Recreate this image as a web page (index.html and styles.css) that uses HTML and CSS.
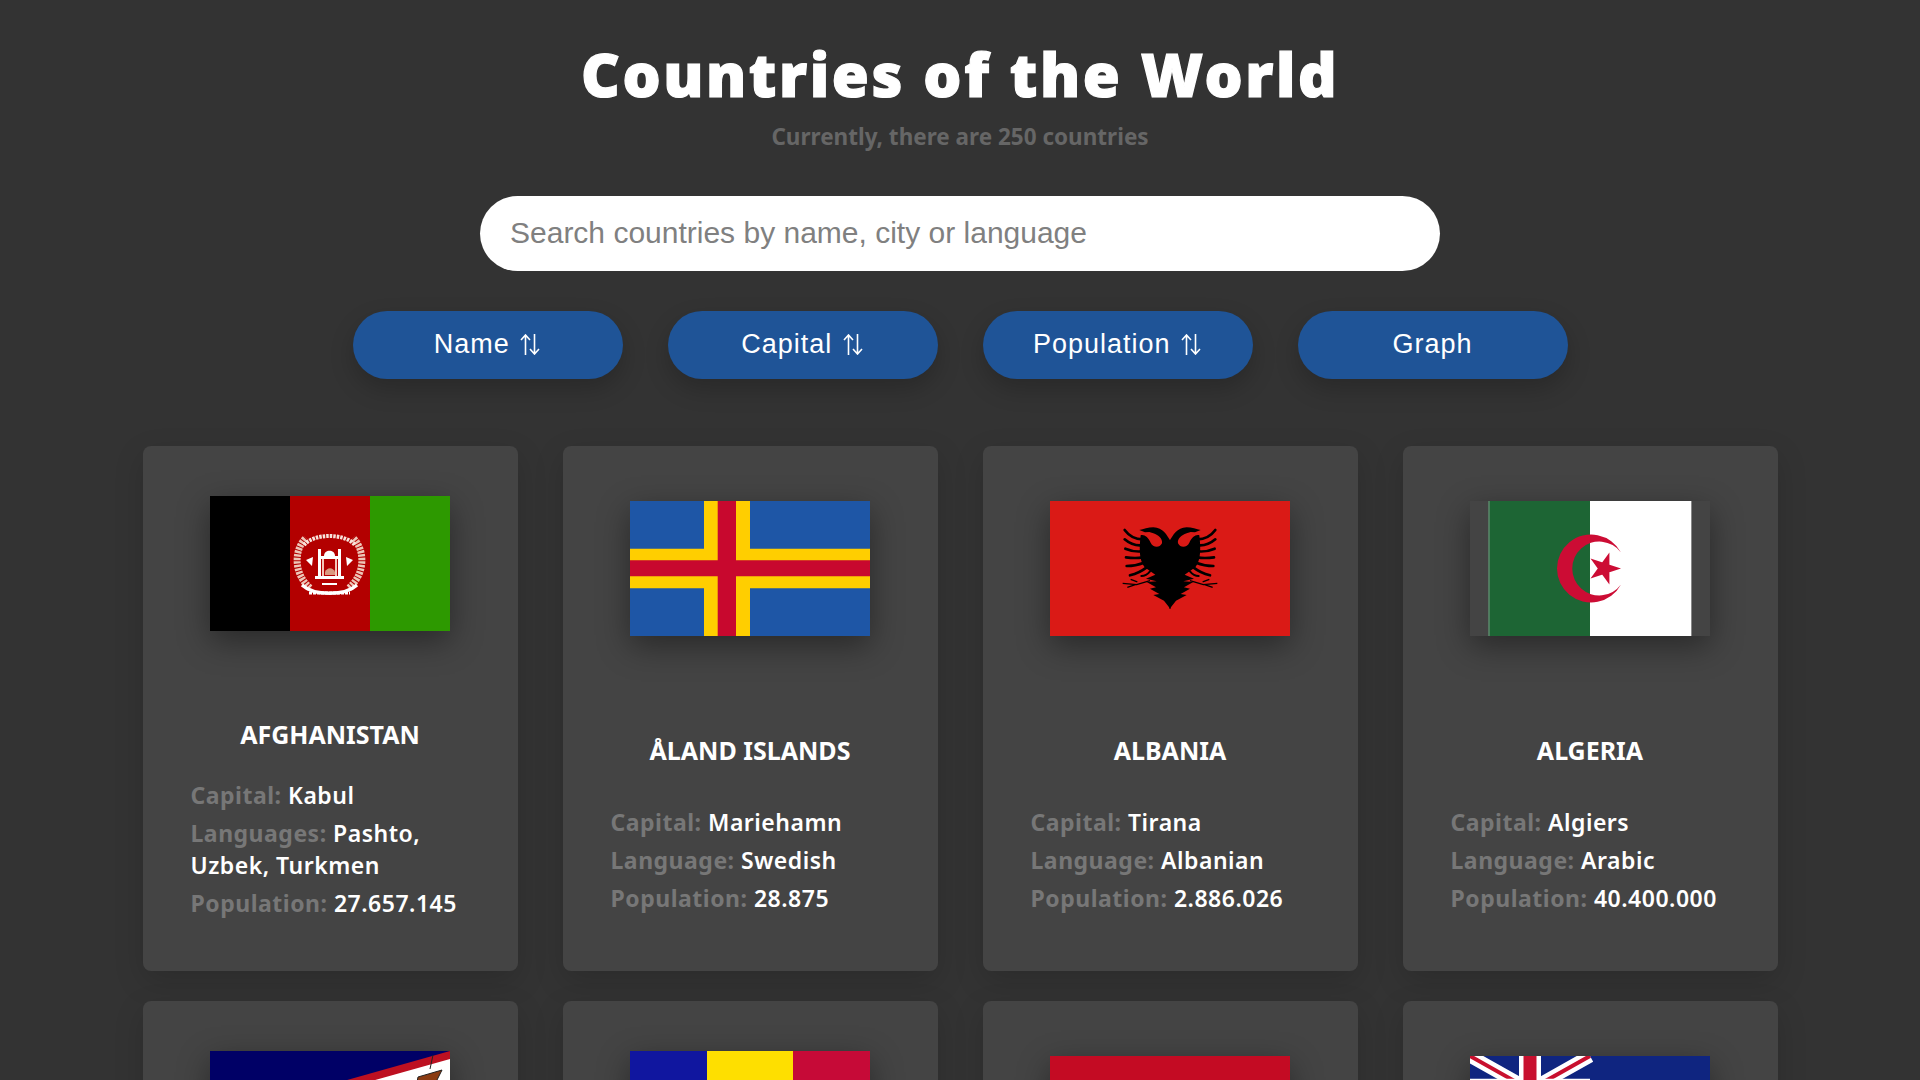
FILE: index.html
```html
<!DOCTYPE html>
<html lang="en">
<head>
<meta charset="utf-8">
<title>Countries of the World</title>
<link rel="stylesheet" href="styles.css">
</head>
<body>
<header class="header">
  <h1 class="title">Countries of the World</h1>
  <p class="subtitle">Currently, there are 250 countries</p>
</header>
<div class="search-row">
  <input class="search" type="text" placeholder="Search countries by name, city or language">
</div>
<div class="sort-row">
  <button class="sort-btn">Name <svg class="arrows" viewBox="0 0 20 21"><path d="M5.500 21V1M1 6l4.500-5 4.500 5M14.500 0v20M10 15l4.500 5 4.500-5"/></svg></button>
  <button class="sort-btn">Capital <svg class="arrows" viewBox="0 0 20 21"><path d="M5.500 21V1M1 6l4.500-5 4.500 5M14.500 0v20M10 15l4.500 5 4.500-5"/></svg></button>
  <button class="sort-btn">Population <svg class="arrows" viewBox="0 0 20 21"><path d="M5.500 21V1M1 6l4.500-5 4.500 5M14.500 0v20M10 15l4.500 5 4.500-5"/></svg></button>
  <button class="sort-btn">Graph</button>
</div>
<main class="grid">
  <article class="card">
    <div class="flag-box">
    <svg class="flag" viewBox="0 0 240 135" role="img" aria-label="Flag of Afghanistan">
      <rect width="80" height="135" fill="#000"/>
      <rect x="80" width="80" height="135" fill="#b30000"/>
      <rect x="160" width="80" height="135" fill="#2d9900"/>
      <g transform="translate(0 2)">
        <g fill="none" stroke="#eec6b8">
          <path d="M100 90C82 74 85 50 96 40" stroke-width="7" stroke-dasharray="2.500 1"/>
          <path d="M139 90C157 74 154 50 143 40" stroke-width="7" stroke-dasharray="2.500 1"/>
          <path d="M94 47C104 35 135 35 145 47" stroke="#f8e4dc" stroke-width="4" stroke-dasharray="2.500 1"/>
          <path d="M92 87C104 98 135 98 147 87" stroke="#fff" stroke-width="3.500"/>
          <path d="M99 95h41" stroke="#fff" stroke-width="3" stroke-dasharray="3 1"/>
        </g>
        <g fill="#fff">
          <path d="M105 78h29v3h-29z"/>
          <path d="M109 58h21v3h-21z"/>
          <path d="M108 51h3v27h-3zM128 51h3v27h-3z"/>
          <path d="M114 58c0-7 11-7 11 0z"/>
          <path d="M112 61h2v17h-2zM125 61h2v17h-2z" fill="#f4c6b8"/>
          <path d="M115 74c2-5 8-5 10 0v3h-10z" fill="#d99a80"/>
          <path d="M96 62l7-3-1 9zM143 62l-7-3 1 9z"/>
          <path d="M112 85h15v2h-15z"/>
        </g>
      </g>
    </svg>
    </div>
    <h2 class="name">AFGHANISTAN</h2>
    <div class="info">
      <p class="line"><span class="label">Capital:</span> Kabul</p>
      <p class="line"><span class="label">Languages:</span> Pashto, Uzbek, Turkmen</p>
      <p class="line"><span class="label">Population:</span> 27.657.145</p>
    </div>
  </article>
  <article class="card">
    <div class="flag-box">
    <svg class="flag" viewBox="0 0 240 135" role="img" aria-label="Flag of Åland Islands">
      <rect width="240" height="135" fill="#1e56a6"/>
      <path d="M74 0h46v135H74zM0 47.700h240v39.600H0z" fill="#ffce00"/>
      <path d="M87.700 0h18.300v135H87.700zM0 59.300h240v16H0z" fill="#c8082e"/>
    </svg>
    </div>
    <h2 class="name">ÅLAND ISLANDS</h2>
    <div class="info">
      <p class="line"><span class="label">Capital:</span> Mariehamn</p>
      <p class="line"><span class="label">Language:</span> Swedish</p>
      <p class="line"><span class="label">Population:</span> 28.875</p>
    </div>
  </article>
  <article class="card">
    <div class="flag-box">
    <svg class="flag" viewBox="0 0 240 135" role="img" aria-label="Flag of Albania">
      <rect width="240" height="135" fill="#da1a16"/>
      <defs>
        <g id="eagle-half">
          <path d="M212 388L192 362 160 345 178 342 150 326 168 322 140 306 170 304 138 296 166 284 134 262C116 240 118 200 122 166 132 162 145 172 152 188 158 202 178 206 186 190 188 176 176 166 160 160L148 156 135 157 118 150C130 148 145 142 160 142 190 143 200 165 212 184z"/>
          <ellipse cx="168" cy="182" rx="12" ry="13" fill="#da1a16"/>
          <g fill="none" stroke="#000" stroke-width="8" stroke-linecap="round">
            <path d="M128 178C105 178 85 165 74 150"/>
            <path d="M126 196C105 198 88 190 74 178"/>
            <path d="M126 214C105 216 90 212 76 206"/>
            <path d="M128 232C108 236 92 234 78 232"/>
            <path d="M132 248C112 256 96 258 80 258"/>
            <path d="M140 262C122 276 106 282 90 286"/>
            <path d="M150 274C142 284 132 288 124 288" stroke-width="6"/>
          </g>
          <path d="M150 302L110 314 68 310M106 314L82 322M112 306L92 298" fill="none" stroke="#000" stroke-width="4"/>
        </g>
      </defs>
      <g transform="translate(50 -21) scale(.3333)">
        <use href="#eagle-half"/>
        <use href="#eagle-half" transform="translate(420 0) scale(-1 1)"/>
      </g>
    </svg>
    </div>
    <h2 class="name">ALBANIA</h2>
    <div class="info">
      <p class="line"><span class="label">Capital:</span> Tirana</p>
      <p class="line"><span class="label">Language:</span> Albanian</p>
      <p class="line"><span class="label">Population:</span> 2.886.026</p>
    </div>
  </article>
  <article class="card">
    <div class="flag-box">
    <svg class="flag" viewBox="0 0 240 135" role="img" aria-label="Flag of Algeria">
      <rect x="18.500" width="101.500" height="135" fill="#1d6534"/>
      <rect x="120" width="101.500" height="135" fill="#fff"/>
      <path d="M18.500 0h1v135h-1z" fill="#7a9a85"/>
      <path d="M221 0h1v135h-1z" fill="#888"/>
      <path d="M151 51.500a34 34 0 1 0 0 32a27 27 0 1 1 0-32z" fill="#cc0c34"/>
      <path d="M151 67.500L120.500 77.400 139.400 51.400 139.400 83.600 120.500 57.600z" fill="#cc0c34"/>
    </svg>
    </div>
    <h2 class="name">ALGERIA</h2>
    <div class="info">
      <p class="line"><span class="label">Capital:</span> Algiers</p>
      <p class="line"><span class="label">Language:</span> Arabic</p>
      <p class="line"><span class="label">Population:</span> 40.400.000</p>
    </div>
  </article>
  <article class="card">
    <div class="flag-box">
    <svg class="flag" viewBox="0 0 240 135" role="img" aria-label="Flag of American Samoa">
      <rect width="240" height="135" fill="#000066"/>
      <path d="M240 0L0 67.500 240 135z" fill="#bd1021"/>
      <path d="M240 8L28 67.500 240 127z" fill="#fff"/>
      <path d="M208 26l24-7-6 12-20 5zM220 18l3-14" fill="#8a3b12" stroke="#222" stroke-width="1"/>
    </svg>
    </div>
    <h2 class="name">AMERICAN SAMOA</h2>
    <div class="info">
      <p class="line"><span class="label">Capital:</span> Pago Pago</p>
      <p class="line"><span class="label">Languages:</span> English, Samoan</p>
      <p class="line"><span class="label">Population:</span> 57.100</p>
    </div>
  </article>
  <article class="card">
    <div class="flag-box">
    <svg class="flag" viewBox="0 0 240 135" role="img" aria-label="Flag of Andorra">
      <rect width="77" height="135" fill="#10169f"/>
      <rect x="77" width="86" height="135" fill="#fedf00"/>
      <rect x="163" width="77" height="135" fill="#c60a37"/>
    </svg>
    </div>
    <h2 class="name">ANDORRA</h2>
    <div class="info">
      <p class="line"><span class="label">Capital:</span> Andorra la Vella</p>
      <p class="line"><span class="label">Language:</span> Catalan</p>
      <p class="line"><span class="label">Population:</span> 78.014</p>
    </div>
  </article>
  <article class="card">
    <div class="flag-box">
    <svg class="flag" viewBox="0 0 240 135" role="img" aria-label="Flag of Angola">
      <rect width="240" height="67.500" fill="#c40b23"/>
      <rect y="67.500" width="240" height="67.500" fill="#000"/>
    </svg>
    </div>
    <h2 class="name">ANGOLA</h2>
    <div class="info">
      <p class="line"><span class="label">Capital:</span> Luanda</p>
      <p class="line"><span class="label">Language:</span> Portuguese</p>
      <p class="line"><span class="label">Population:</span> 25.868.000</p>
    </div>
  </article>
  <article class="card">
    <div class="flag-box">
    <svg class="flag" viewBox="0 0 240 135" role="img" aria-label="Flag of Anguilla">
      <rect width="240" height="135" fill="#0f2580"/>
      <g>
        <path d="M0 0L120 67.500M120 0L0 67.500" stroke="#fff" stroke-width="13"/>
        <path d="M0 0L120 67.500M120 0L0 67.500" stroke="#c8102e" stroke-width="4"/>
        <path d="M60 0v67.500M0 33.750h120" stroke="#fff" stroke-width="22"/>
        <path d="M60 0v67.500M0 33.750h120" stroke="#c8102e" stroke-width="13"/>
      </g>
    </svg>
    </div>
    <h2 class="name">ANGUILLA</h2>
    <div class="info">
      <p class="line"><span class="label">Capital:</span> The Valley</p>
      <p class="line"><span class="label">Language:</span> English</p>
      <p class="line"><span class="label">Population:</span> 13.452</p>
    </div>
  </article>
</main>
</body>
</html>
```

FILE: styles.css
```css
html, body {
  margin: 0;
  padding: 0;
  background: #333;
}

body {
  font-family: "Noto Sans", sans-serif;
  color: #fff;
  overflow-x: hidden;
}

.header {
  padding-top: 37px;
  text-align: center;
}

.title {
  margin: 0;
  font-size: 60px;
  line-height: 74px;
  font-weight: 900;
  letter-spacing: 2.600px;
  -webkit-text-stroke: 1.200px #fff;
  color: #fff;
}

.subtitle {
  margin: 11px 0 0;
  font-size: 22.500px;
  line-height: 30px;
  font-weight: 700;
  color: #666;
}

.search-row {
  display: flex;
  justify-content: center;
  margin-top: 44px;
}

.search {
  box-sizing: border-box;
  width: 960px;
  height: 75px;
  padding: 0 30px 2px;
  border: none;
  border-radius: 38px;
  background: #fff;
  font-family: "Liberation Sans", Arial, sans-serif;
  font-size: 30px;
  outline: none;
}

.search::placeholder {
  color: #808080;
}

.sort-row {
  display: flex;
  justify-content: center;
  gap: 45px;
  margin-top: 40px;
}

.sort-btn {
  box-sizing: border-box;
  width: 270px;
  height: 68px;
  padding: 0 0 2px;
  border: none;
  border-radius: 34px;
  background: #1f5497;
  color: #fff;
  font-family: "Liberation Sans", Arial, sans-serif;
  font-size: 27px;
  letter-spacing: 1px;
  box-shadow: 0 10px 25px rgba(0, 0, 0, .2);
}

.arrows {
  width: 20px;
  height: 21px;
  margin-left: 2px;
  margin-right: 1px;
  vertical-align: -2px;
  fill: none;
  stroke: #fff;
  stroke-width: 1.600;
}

.grid {
  display: grid;
  grid-template-columns: repeat(4, 375px);
  justify-content: center;
  column-gap: 45px;
  row-gap: 30px;
  margin-top: 67px;
  padding-bottom: 40px;
}

.card {
  box-sizing: border-box;
  height: 525px;
  padding: 35.500px 48px 37px;
  display: flex;
  flex-direction: column;
  justify-content: space-around;
  background: #444;
  border-radius: 8px;
  box-shadow: 0 10px 30px rgba(0, 0, 0, .15);
}

.flag-box {
  flex: none;
  height: 193px;
}

.flag {
  display: block;
  width: 240px;
  height: 135px;
  margin: 0 auto;
  box-shadow: 0 10px 30px rgba(0, 0, 0, .4);
}

.name {
  margin: 0;
  font-size: 25px;
  line-height: 32px;
  font-weight: 700;
  text-align: center;
  color: #fff;
}

.info {
  display: flex;
  flex-direction: column;
  gap: 6px;
}

.line {
  margin: 0;
  font-size: 23px;
  line-height: 32px;
  font-weight: 600;
  letter-spacing: .5px;
  color: #fff;
}

.label {
  font-weight: 700;
  color: #777;
}
```
